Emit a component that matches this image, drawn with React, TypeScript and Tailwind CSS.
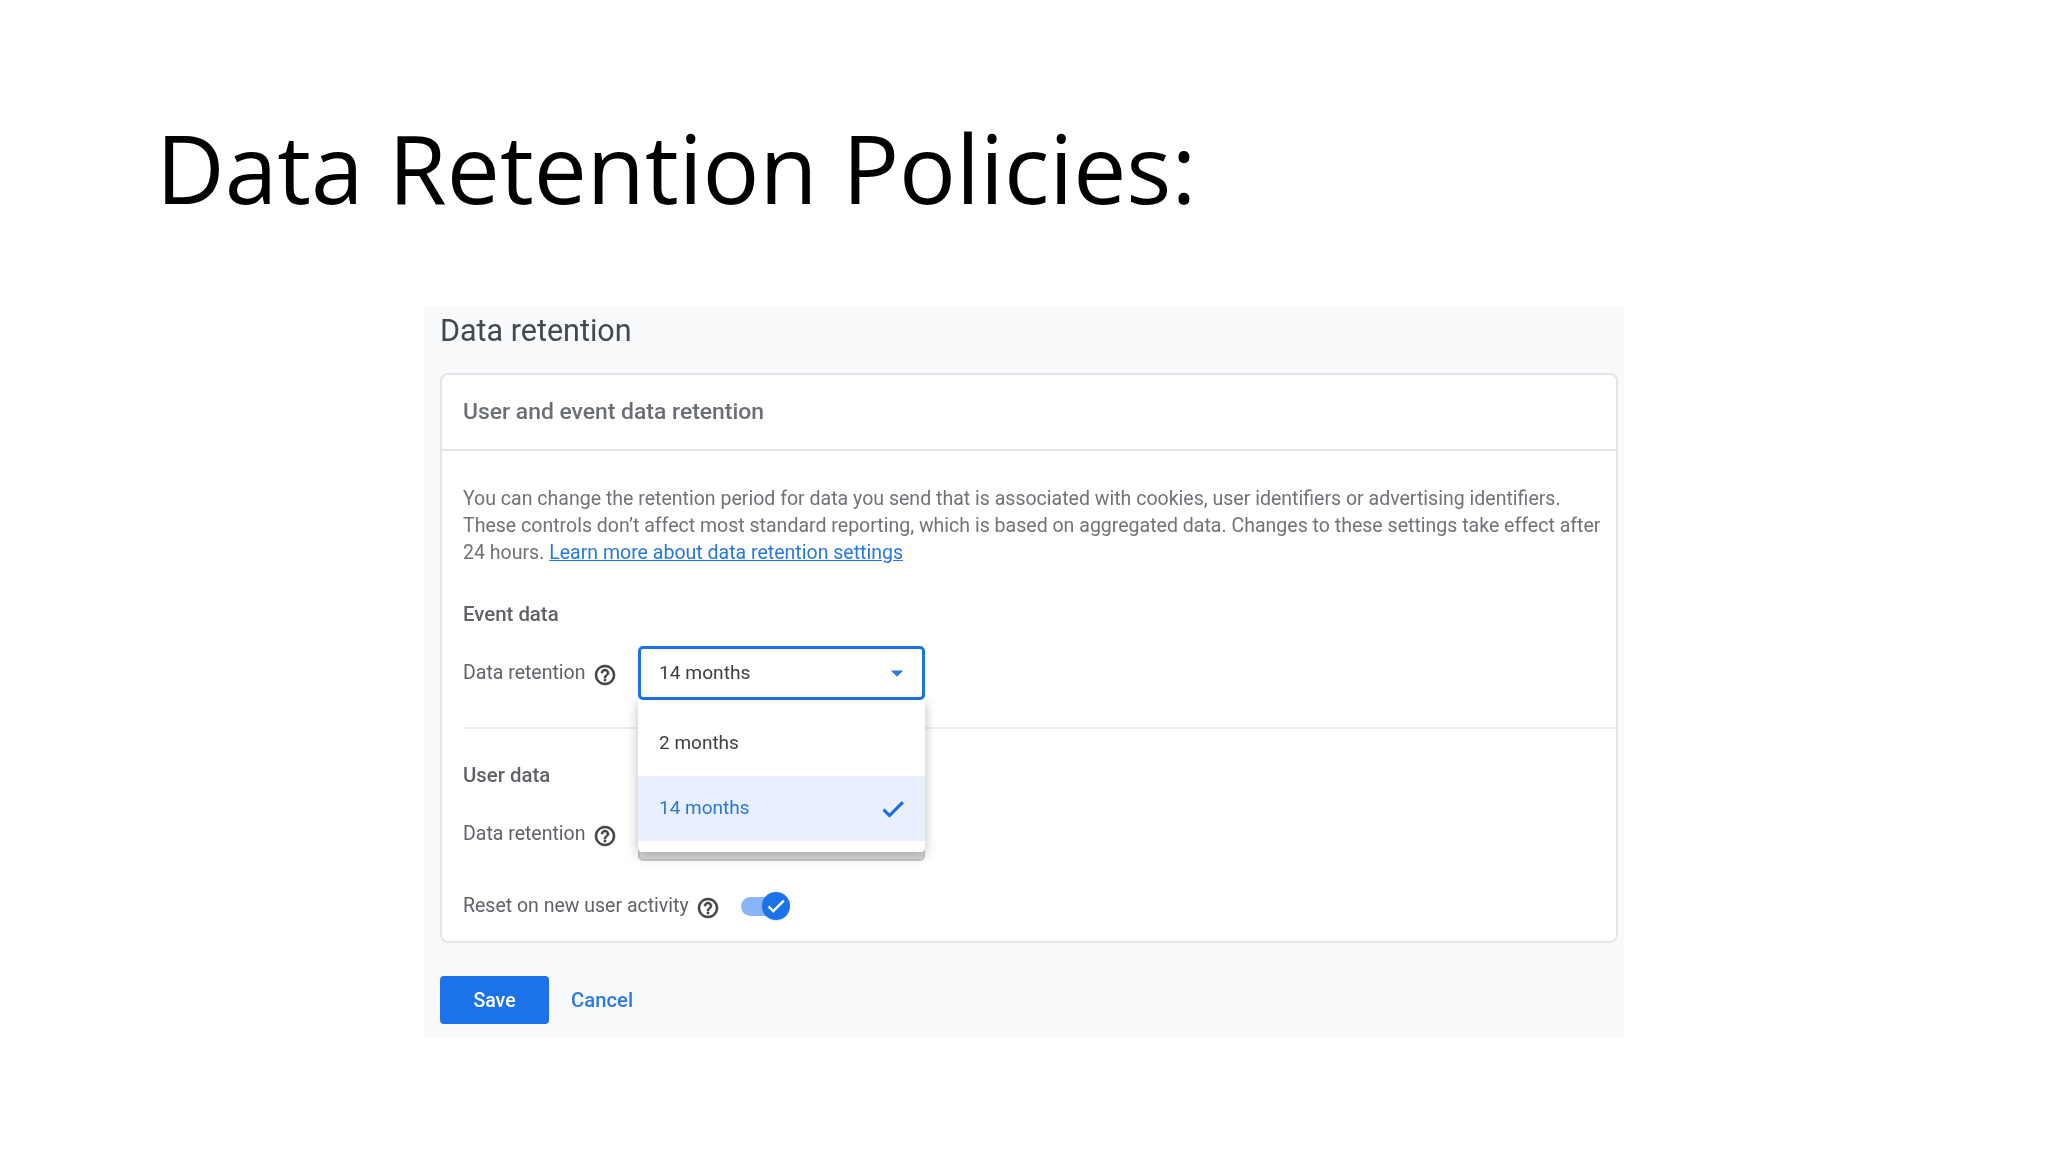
import { MdArrowDropDown } from 'react-icons/md'

const roboto = 'font-[Roboto,sans-serif]'

function Help() {
  return (
    <svg viewBox="0 0 24 24" className="ml-[7px] mt-[4px] h-[24px] w-[24px] shrink-0 fill-[#3c4043] stroke-[#3c4043] stroke-[0.5px]">
      <path d="M11 18h2v-2h-2v2zm1-16C6.48 2 2 6.48 2 12s4.48 10 10 10 10-4.48 10-10S17.52 2 12 2zm0 18c-4.41 0-8-3.59-8-8s3.59-8 8-8 8 3.59 8 8-3.59 8-8 8zm0-14c-2.21 0-4 1.79-4 4h2c0-1.1.9-2 2-2s2 .9 2 2c0 2-3 1.75-3 5h2c0-2.25 3-2.5 3-5 0-2.21-1.79-4-4-4z" />
    </svg>
  )
}

function Check({ className }: { className: string }) {
  return (
    <svg viewBox="0 0 24 24" className={className}>
      <path d="M9 16.17L4.83 12l-1.42 1.41L9 19 21 7l-1.41-1.41z" />
    </svg>
  )
}

function RowLabel({ label }: { label: string }) {
  return (
    <div className="flex w-[175px] shrink-0 items-center">
      <span className="whitespace-nowrap text-[19.5px] leading-[28px] text-[#5f6368]">{label}</span>
      <Help />
    </div>
  )
}

export default function App() {
  return (
    <div className="h-[1152px] w-[2048px] overflow-hidden bg-white">
      <h1 className="whitespace-nowrap pl-[156px] pt-[108px] font-['Open_Sans',sans-serif] text-[94.7px] leading-[120px] text-black">
        Data Retention Policies:
      </h1>

      <div className={`ml-[424px] mt-[78px] h-[732px] w-[1200px] bg-[#f9fafb] pl-[16px] pr-[6px] pt-[6px] blur-[0.5px] ${roboto}`}>
        <h2 className="h-[61px] text-[30.5px] leading-[38px] text-[#44484c]">Data retention</h2>

        <section className="h-[570px] rounded-lg border-2 border-[#e3e5e8] bg-white">
          <div className="flex h-[76px] items-center border-b-2 border-[#e3e5e8] pl-[21px]">
            <h3 className="text-[22.9px] font-medium text-[#6b6f73]">User and event data retention</h3>
          </div>

          <div className="pl-[21px] pt-[34px]">
            <p className="whitespace-nowrap text-[19.55px] leading-[27px] text-[#6f7377]">
              You can change the retention period for data you send that is associated with cookies, user identifiers or advertising identifiers.
              <br />
              These controls don’t affect most standard reporting, which is based on aggregated data. Changes to these settings take effect after
              <br />
              24 hours. <a className="text-[#2577e3] underline">Learn more about data retention settings</a>
            </p>

            <h4 className="mt-[34px] text-[20.4px] font-medium leading-[28px] text-[#5f6368]">Event data</h4>

            <div className="mt-[18px] flex items-center">
              <RowLabel label="Data retention" />
              <div className="relative">
                <div className="flex h-[54px] w-[287px] items-center justify-between rounded-[5px] border-[3px] border-[#1a73e8] bg-white pl-[18px] pr-[10px]">
                  <span className="text-[19.2px] text-[#3c4043]">14 months</span>
                  <MdArrowDropDown className="h-[30px] w-[30px] text-[#2a7ae2]" />
                </div>

                <div className="absolute left-0 top-full z-10 h-[152px] w-[287px] rounded-b-[4px] bg-white pt-[11px] shadow-[0_3px_12px_rgba(60,64,67,0.35)]">
                  <div className="flex h-[65px] items-center pl-[21px] text-[19px] text-[#3c4043]">2 months</div>
                  <div className="flex h-[65px] items-center justify-between bg-[#e8f0fe] pl-[21px] pr-[18px] text-[19px] text-[#2a76dc]">
                    <span>14 months</span>
                    <Check className="h-[28px] w-[28px] fill-[#1a6fdc] stroke-[#1a6fdc] stroke-[0.8px]" />
                  </div>
                </div>
              </div>
            </div>

            <div className="mt-[27px] border-t-2 border-[#eceef0]" />

            <h4 className="mt-[32px] text-[20.4px] font-medium leading-[28px] text-[#5f6368]">User data</h4>

            <div className="mt-[18px] flex items-center">
              <RowLabel label="Data retention" />
              <div className="h-[54px] w-[287px] rounded-[5px] border-2 border-[#c4c6c8] bg-[#d8d9da]" />
            </div>

            <div className="mt-[31px] flex items-center">
              <span className="whitespace-nowrap text-[19.5px] leading-[28px] text-[#5f6368]">Reset on new user activity</span>
              <Help />
              <div className="relative ml-[21px] h-[19px] w-[42px] rounded-full bg-[#8ab4f8]">
                <div className="absolute -right-[7px] top-1/2 flex h-[28px] w-[28px] -translate-y-1/2 items-center justify-center rounded-full bg-[#1a73e8] shadow">
                  <Check className="h-[22px] w-[22px] fill-white stroke-white stroke-[0.8px]" />
                </div>
              </div>
            </div>
          </div>
        </section>

        <div className="mt-[33px] flex items-center gap-[22px]">
          <button className="h-[48px] w-[109px] rounded-[4px] bg-[#1a73e8] pt-px text-[19.5px] font-medium text-white">Save</button>
          <button className="text-[20.3px] font-medium text-[#2a7ae2]">Cancel</button>
        </div>
      </div>
    </div>
  )
}
